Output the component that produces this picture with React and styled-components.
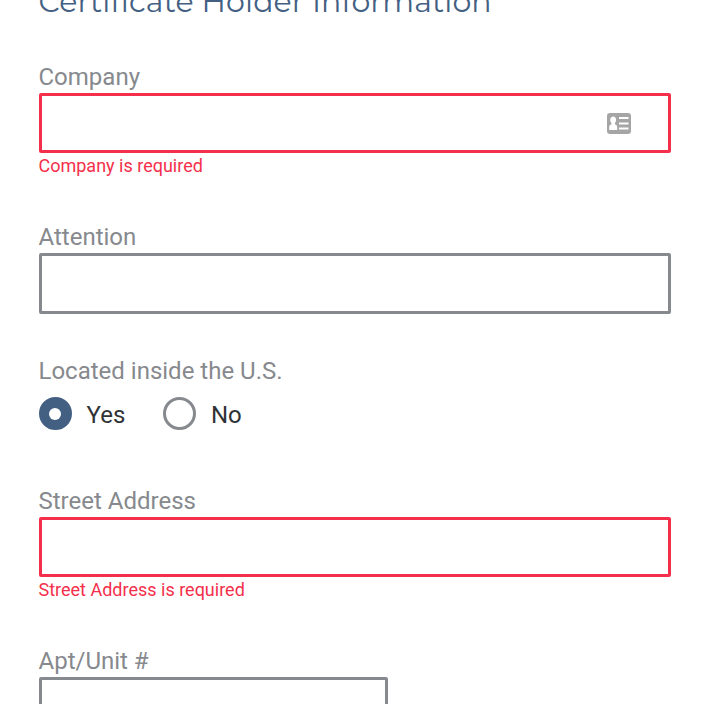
import React from "react";
import styled, { createGlobalStyle } from "styled-components";

const GlobalStyle = createGlobalStyle`
  body { margin: 0; background: #fff; overflow: hidden; }
  * { box-sizing: border-box; }
`;

const Form = styled.form`
  height: 704px;
  overflow: hidden;
  padding: 0 40px 0 39px;
  font-family: Roboto, sans-serif;
`;

const Heading = styled.h2`
  margin: -20px 0 0 -0.5px;
  height: 83px;
  font: 400 30px/44px Montserrat, Lato, sans-serif;
  letter-spacing: 0.1px;
  color: #436083;
  white-space: nowrap;
`;

const Field = styled.div`
  height: ${(p) => p.$height || 160}px;
`;

const Label = styled.label`
  display: block;
  height: 30px;
  margin-left: -0.5px;
  font-size: 24px;
  line-height: 28px;
  color: #86898d;
`;

const InputBox = styled.div`
  display: flex;
  align-items: center;
  justify-content: flex-end;
  width: ${(p) => p.$width || "100%"};
  height: ${(p) => p.$height || 60}px;
  padding-right: 37px;
  border: 3px solid ${(p) => (p.$invalid ? "#f42f4b" : "#86898d")};
  border-radius: 2px;
`;

const ErrorText = styled.div`
  margin-left: -0.5px;
  padding-top: 2px;
  font-size: 18px;
  line-height: 22px;
  color: #f42f4b;
`;

const RadioGroup = styled.div`
  display: flex;
  padding-top: 10px;
`;

const Option = styled.div`
  display: flex;
  align-items: center;
  gap: ${(p) => p.$gap || 14.5}px;
  width: 124px;
  height: 33px;
  font-size: 24px;
  line-height: 33px;
  color: #303336;
`;

const OptionText = styled.span`
  padding-top: 3px;
`;

const Radio = styled.span`
  display: flex;
  align-items: center;
  justify-content: center;
  width: 33px;
  height: 33px;
  border-radius: 50%;
  border: 3px solid ${(p) => (p.$checked ? "#436083" : "#86898d")};
  background: ${(p) => (p.$checked ? "#436083" : "#fff")};

  &::after {
    content: "";
    width: 12px;
    height: 12px;
    margin-right: 1px;
    border-radius: 50%;
    background: #fff;
  }
`;

function ContactIcon() {
  return (
    <svg width="24" height="21" viewBox="0 0 24 21">
      <rect width="24" height="21" rx="3" fill="#a5a5a5" />
      <path
        fill="#fff"
        d="M6.200 3.500c1.800 0 2.900 1.300 2.900 3.200 0 1.400-.5 2.600-1.200 3.200v1.300c1.400.5 2.300 1.400 2.300 3v2.800H2.200v-2.800c0-1.600.9-2.500 2.300-3V9.900c-.8-.6-1.300-1.800-1.300-3.200 0-1.900 1.200-3.200 3-3.200z"
      />
      <path d="M12 5h9.500M12 10.500h9.500M12 15.500h9.500" stroke="#fff" strokeWidth="2.200" />
    </svg>
  );
}

export default function App() {
  return (
    <>
      <GlobalStyle />
      <Form>
        <Heading>Certificate Holder Information</Heading>
        <Field>
          <Label>Company</Label>
          <InputBox $invalid>
            <ContactIcon />
          </InputBox>
          <ErrorText>Company is required</ErrorText>
        </Field>
        <Field $height={134}>
          <Label>Attention</Label>
          <InputBox $height={61} />
        </Field>
        <Field $height={130}>
          <Label as="div">Located inside the U.S.</Label>
          <RadioGroup>
            <Option>
              <Radio $checked />
              <OptionText>Yes</OptionText>
            </Option>
            <Option $gap={15}>
              <Radio />
              <OptionText>No</OptionText>
            </Option>
          </RadioGroup>
        </Field>
        <Field>
          <Label>Street Address</Label>
          <InputBox $invalid />
          <ErrorText>Street Address is required</ErrorText>
        </Field>
        <Field>
          <Label>Apt/Unit #</Label>
          <InputBox $width="349px" />
        </Field>
      </Form>
    </>
  );
}
